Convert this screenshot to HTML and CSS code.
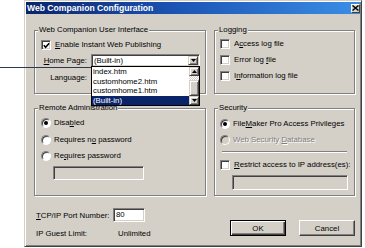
FILE: index.html
```html
<!DOCTYPE html>
<html>
<head>
<meta charset="utf-8">
<link rel="stylesheet" href="styles.css">
</head>
<body>
<div class="dialog">
  <div class="titlebar">
    <span class="title">Web Companion Configuration</span>
    <span class="close"><svg width="7" height="6" viewBox="0 0 7 6"><path d="M0.5 0.5 L6.5 5.5 M6.5 0.5 L0.5 5.5" stroke="#000" stroke-width="1.4"/></svg></span>
  </div>
  <div class="content">
    <div class="groups">
      <fieldset class="group top-group ui-group">
        <legend>Web Companion User Interface</legend>
        <label class="opt-row first-check">
          <span class="chk"><svg width="7" height="7" viewBox="0 0 7 7"><path d="M0.8 3.2 L2.6 5.2 L6.2 1.2" fill="none" stroke="#000" stroke-width="1.6"/></svg></span>
          <span><u>E</u>nable Instant Web Publishing</span>
        </label>
        <div class="field-row home-row">
          <span class="lbl"><u>H</u>ome Page:</span>
          <div class="combo">
            <span class="combo-val">(Built-in)</span>
            <span class="drop-btn"><svg width="5" height="3" viewBox="0 0 5 3"><path d="M0 0 H5 L2.5 3 Z" fill="#000"/></svg></span>
            <div class="droplist">
              <div class="items">
                <div class="item">index.htm</div>
                <div class="item">customhome2.htm</div>
                <div class="item">customhome1.htm</div>
                <div class="item sel">(Built-in)</div>
              </div>
              <div class="scrollbar">
                <span class="sb-btn"><svg width="5" height="3" viewBox="0 0 5 3"><path d="M0 3 H5 L2.5 0 Z" fill="#000"/></svg></span>
                <span class="sb-track"></span>
                <span class="sb-thumb"></span>
                <span class="sb-btn"><svg width="5" height="3" viewBox="0 0 5 3"><path d="M0 0 H5 L2.5 3 Z" fill="#000"/></svg></span>
              </div>
            </div>
          </div>
        </div>
        <div class="field-row lang-row">
          <span class="lbl">Language:</span>
          <div class="combo lang-combo"></div>
        </div>
      </fieldset>

      <fieldset class="group top-group log-group">
        <legend>Logging</legend>
        <label class="opt-row"><span class="chk"></span><span>A<u>c</u>cess log file</span></label>
        <label class="opt-row"><span class="chk"></span><span>Error log <u>f</u>ile</span></label>
        <label class="opt-row"><span class="chk"></span><span>I<u>n</u>formation log file</span></label>
      </fieldset>

      <fieldset class="group bottom-group remote-group">
        <legend>Remote Administration</legend>
        <label class="opt-row r1"><span class="radio on"></span><span>Disa<u>b</u>led</span></label>
        <label class="opt-row r2"><span class="radio"></span><span>Requires n<u>o</u> password</span></label>
        <label class="opt-row r3"><span class="radio"></span><span>Re<u>q</u>uires password</span></label>
        <span class="input disabled pw-field"></span>
      </fieldset>

      <fieldset class="group bottom-group sec-group">
        <legend>Security</legend>
        <label class="opt-row s1"><span class="radio on"></span><span>File<u>M</u>aker Pro Access Privileges</span></label>
        <label class="opt-row s2 dim"><span class="radio off"></span><span>Web Security <u>D</u>atabase</span></label>
        <div class="sep"></div>
        <label class="opt-row s3"><span class="chk"></span><span><u>R</u>estrict access to IP address(es):</span></label>
        <span class="input disabled ip-field"></span>
      </fieldset>
    </div>

    <div class="footer">
      <div class="port-area">
        <div class="port-row"><span class="port-lbl"><u>T</u>CP/IP Port Number:</span><span class="input port">80</span></div>
        <div class="guest-row"><span class="guest-lbl">IP Guest Limit:</span><span>Unlimited</span></div>
      </div>
      <div class="buttons">
        <button class="btn default">OK</button>
        <button class="btn">Cancel</button>
      </div>
    </div>
  </div>
</div>
<div class="callout"></div>
</body>
</html>
```

FILE: styles.css
```css
html, body {
  margin: 0;
  padding: 0;
  background: #fff;
}
body {
  position: relative;
  width: 365px;
  height: 248px;
  overflow: hidden;
  font-family: "Liberation Sans", Arial, sans-serif;
  font-size: 7.8px;
  color: #000;
}
u { text-decoration: underline; text-underline-offset: 1px; }

.dialog {
  margin-left: 24px;
  width: 338px;
  height: 247px;
  box-sizing: border-box;
  background: #d4d0c8;
  border: 1px solid;
  border-color: #d4d0c8 #404040 #404040 #d4d0c8;
  box-shadow: inset 1px 1px #fff, inset -1px -1px #808080;
  padding: 1px;
}

.titlebar {
  height: 12px;
  display: flex;
  align-items: center;
  justify-content: space-between;
  padding-left: 1px;
  background: linear-gradient(90deg, #0a246a 0%, #1c54b4 45%, #3a8ee6 100%);
}
.title {
  color: #fff;
  font-weight: bold;
  font-size: 8.6px;
  line-height: 12px;
}
.close {
  width: 9px;
  height: 9px;
  box-sizing: border-box;
  background: #d4d0c8;
  border: 1px solid;
  border-color: #fff #404040 #404040 #fff;
  display: flex;
  align-items: center;
  justify-content: center;
}

.content {
  padding: 11px 5px 0 8px;
}

.groups {
  display: grid;
  grid-template-columns: 172px 141px;
  grid-template-rows: 69px 93px;
  column-gap: 8px;
  row-gap: 9px;
}

.group {
  margin: 0;
  padding: 0;
  min-width: 0;
  box-sizing: border-box;
  border: 1px solid #808080;
  box-shadow: inset 1px 1px #fff, 1px 1px #fff;
}
.group legend {
  padding: 0 1px;
  margin-left: 3px;
  line-height: 10px;
  background: #d4d0c8;
}

.opt-row {
  display: flex;
  align-items: center;
  height: 10px;
  line-height: 10px;
  gap: 4px;
  white-space: nowrap;
}

.chk {
  width: 10px;
  height: 10px;
  box-sizing: border-box;
  background: #fff;
  border: 1px solid;
  border-color: #808080 #fff #fff #808080;
  box-shadow: inset 1px 1px #404040, inset -1px -1px #d4d0c8;
  display: flex;
  align-items: center;
  justify-content: center;
  flex: none;
}

.radio {
  width: 10px;
  height: 10px;
  box-sizing: border-box;
  border-radius: 50%;
  background: #fff;
  border: 1px solid;
  border-color: #808080 #fff #fff #808080;
  box-shadow: inset 1px 1px #404040;
  display: flex;
  align-items: center;
  justify-content: center;
  flex: none;
}
.radio.on::after {
  content: "";
  width: 4px;
  height: 4px;
  border-radius: 50%;
  background: #000;
}
.radio.off { background: #d4d0c8; }
.dim { color: #808080; text-shadow: 1px 1px #fff; }

/* UI group */
.ui-group .first-check { margin: 5px 0 0 6px; }
.field-row {
  display: grid;
  grid-template-columns: 52px 109px;
  column-gap: 4px;
  align-items: center;
}
.home-row { margin-top: 4px; height: 13px; }
.lang-row { margin-top: 4px; height: 12px; }
.lbl { text-align: right; white-space: nowrap; }

.combo {
  position: relative;
  height: 13px;
  box-sizing: border-box;
  background: #fff;
  border: 1px solid;
  border-color: #808080 #fff #fff #808080;
  box-shadow: inset 1px 1px #404040, inset -1px -1px #d4d0c8;
  display: flex;
  align-items: center;
  padding: 0 1px 0 2px;
}
.lang-combo { height: 12px; }
.combo-val { flex: 1; line-height: 9px; }
.drop-btn {
  width: 10px;
  height: 9px;
  box-sizing: border-box;
  background: #d4d0c8;
  border: 1px solid;
  border-color: #d4d0c8 #404040 #404040 #d4d0c8;
  box-shadow: inset 1px 1px #fff, inset -1px -1px #808080;
  display: flex;
  align-items: center;
  justify-content: center;
}

.droplist {
  position: absolute;
  z-index: 2;
  left: -1px;
  top: 11px;
  width: 109px;
  height: 40px;
  box-sizing: border-box;
  border: 1px solid #000;
  background: #fff;
  display: flex;
}
.items { flex: 1; }
.item {
  height: 9.5px;
  line-height: 9.5px;
  padding-left: 1px;
  white-space: nowrap;
}
.item.sel { background: #0a246a; color: #fff; }
.scrollbar {
  width: 10px;
  display: flex;
  flex-direction: column;
}
.sb-btn {
  height: 9px;
  box-sizing: border-box;
  background: #d4d0c8;
  border: 1px solid;
  border-color: #d4d0c8 #404040 #404040 #d4d0c8;
  box-shadow: inset 1px 1px #fff, inset -1px -1px #808080;
  display: flex;
  align-items: center;
  justify-content: center;
}
.sb-track {
  height: 4px;
  background: repeating-conic-gradient(#fff 0 25%, #d4d0c8 0 50%) 0 0 / 2px 2px;
}
.sb-thumb {
  flex: 1;
  box-sizing: border-box;
  background: #d4d0c8;
  border: 1px solid;
  border-color: #d4d0c8 #404040 #404040 #d4d0c8;
  box-shadow: inset 1px 1px #fff, inset -1px -1px #808080;
}

/* Logging */
.log-group .opt-row { margin: 6px 0 0 5px; }
.log-group .opt-row:first-of-type { margin-top: 4px; }

/* Remote */
.remote-group .opt-row { margin-left: 6px; gap: 3px; }
.remote-group .r1 { margin-top: 5px; }
.remote-group .r2 { margin-top: 7px; }
.remote-group .r3 { margin-top: 6px; }

.input {
  display: block;
  box-sizing: border-box;
  border: 1px solid;
  border-color: #808080 #fff #fff #808080;
  box-shadow: inset 1px 1px #404040, inset -1px -1px #d4d0c8;
  background: #fff;
}
.input.disabled { background: #d4d0c8; }
.pw-field {
  margin: 5px 0 0 18px;
  width: 91px;
  height: 14px;
}

/* Security */
.sec-group .opt-row { margin-left: 5px; }
.sec-group .s1 { margin-top: 6px; gap: 3px; }
.sec-group .s2 { margin-top: 6px; gap: 3px; }
.sep {
  margin: 6px 7px 0 7px;
  height: 1px;
  background: #808080;
  box-shadow: 0 1px #fff;
}
.sec-group .s3 { margin-top: 8px; }
.ip-field {
  margin: 5px 0 0 17px;
  width: 116px;
  height: 15px;
}

/* Footer */
.footer {
  display: flex;
  justify-content: space-between;
  align-items: flex-start;
}
.port-area { padding-left: 2px; }
.port-row {
  margin-top: 12px;
  display: flex;
  align-items: center;
  height: 14px;
}
.port-lbl { width: 77px; white-space: nowrap; }
.port {
  width: 32px;
  height: 14px;
  line-height: 12px;
  padding-left: 2px;
}
.guest-row {
  margin-top: 7px;
  display: flex;
  height: 10px;
  line-height: 10px;
}
.guest-lbl { width: 82px; }

.buttons {
  margin-top: 24px;
  display: flex;
  gap: 13px;
}
.btn {
  width: 56px;
  height: 16px;
  box-sizing: border-box;
  padding: 0;
  font: inherit;
  color: #000;
  background: #d4d0c8;
  border: 1px solid;
  border-color: #fff #404040 #404040 #fff;
  box-shadow: inset -1px -1px #808080, inset 1px 1px #d4d0c8;
}
.btn.default {
  border-color: #000;
  box-shadow: inset 1px 1px #fff, inset -1px -1px #404040, inset -2px -2px #808080;
}

.callout {
  position: absolute;
  left: 0;
  top: 67px;
  width: 91px;
  height: 1px;
  background: #2b3850;
  z-index: 3;
}
```
